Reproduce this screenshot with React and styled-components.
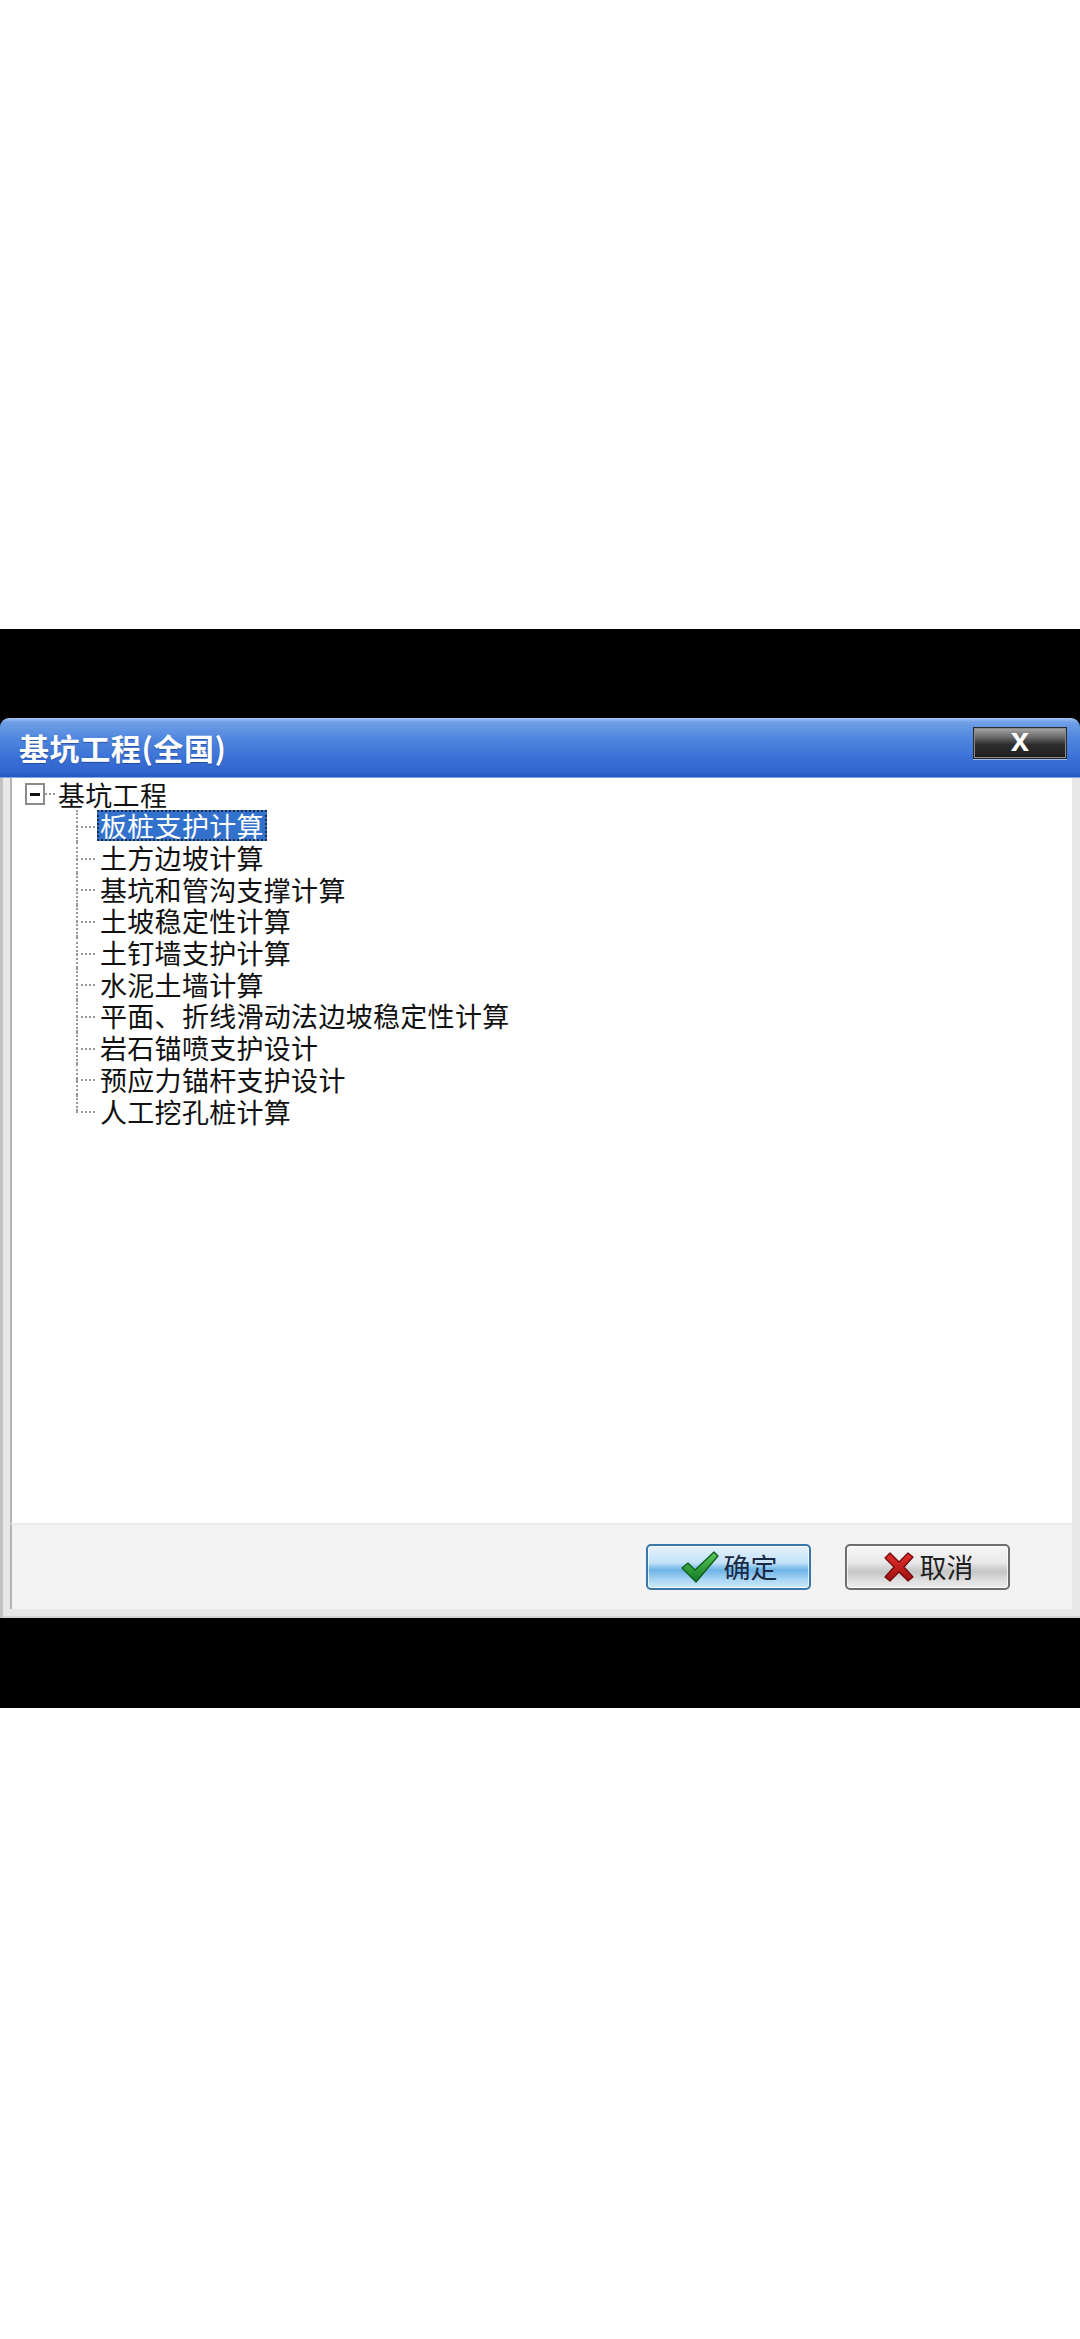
import React from 'react'
import styled, { createGlobalStyle } from 'styled-components'

const Global = createGlobalStyle`
  html, body { margin:0; padding:0; background:#fff; }
  body { font-family: "Noto Sans CJK SC", "Noto Sans", sans-serif; }
`

const items = [
  '板桩支护计算',
  '土方边坡计算',
  '基坑和管沟支撑计算',
  '土坡稳定性计算',
  '土钉墙支护计算',
  '水泥土墙计算',
  '平面、折线滑动法边坡稳定性计算',
  '岩石锚喷支护设计',
  '预应力锚杆支护设计',
  '人工挖孔桩计算',
]

const CheckIcon = () => (
  <svg width="40" height="34" viewBox="0 0 40 34">
    <defs>
      <linearGradient id="ck" x1="0" y1="0" x2="0" y2="1">
        <stop offset="0" stopColor="#5cc85a" />
        <stop offset="1" stopColor="#0d7a22" />
      </linearGradient>
    </defs>
    <path d="M2 18 L8 13 L15 20 L34 2 L38 6 L16 32 Z" fill="url(#ck)" stroke="#0b5a18" strokeWidth="1.2" strokeLinejoin="round" />
  </svg>
)

const CrossIcon = () => (
  <svg width="34" height="32" viewBox="0 0 34 32">
    <defs>
      <linearGradient id="cx" x1="0" y1="0" x2="0" y2="1">
        <stop offset="0" stopColor="#e0302c" />
        <stop offset="1" stopColor="#a00f10" />
      </linearGradient>
    </defs>
    <path d="M3 7 L8 2 L17 11 L26 2 L31 6 L22 16 L31 26 L26 30 L17 21 L8 30 L3 26 L12 16 Z" fill="url(#cx)" stroke="#6e0808" strokeWidth="1.2" strokeLinejoin="round" />
  </svg>
)

export default function App() {
  return <Page>
    <Global />
    <Spacer h={629} />
    <Band h={89} />
    <Dialog>
      <TitleBar>
        <Title>基坑工程(全国)</Title>
        <CloseButton>x</CloseButton>
      </TitleBar>
      <Frame>
        <Tree>
          <RootRow>
            <Toggle><Minus /></Toggle>
            <Stub />
            <Label>基坑工程</Label>
          </RootRow>
          <Children>
            {items.map((t, i) =>
              <Child key={t} last={i === items.length - 1}>
                <Label selected={i === 0}>{t}</Label>
              </Child>
            )}
          </Children>
        </Tree>
        <ButtonBar>
          <Button primary>
            <CheckIcon />
            <span>确定</span>
          </Button>
          <Button>
            <CrossIcon />
            <span>取消</span>
          </Button>
        </ButtonBar>
      </Frame>
    </Dialog>
    <Band h={90} />
  </Page>
}

const Page = styled.div`
  width:1080px;
  height:2339px;
  display:flex;
  flex-direction:column;
  background:#fff;
  overflow:hidden;
`
const Spacer = styled.div`
  height:${p => p.h}px;
  flex-shrink:0;
`
const Band = styled.div`
  height:${p => p.h}px;
  flex-shrink:0;
  background:#000;
`
const Dialog = styled.div`
  height:900px;
  flex-shrink:0;
  display:flex;
  flex-direction:column;
  background:#000;
`
const TitleBar = styled.div`
  height:59px;
  flex-shrink:0;
  display:flex;
  align-items:flex-start;
  justify-content:space-between;
  border-radius:9px 9px 0 0;
  background:linear-gradient(to bottom, #a6c4f2 0%, #6f9fe6 7%, #4f86de 35%, #3c73d7 65%, #2f64cd 92%, #2558c0 100%);
  border-bottom:1px solid #7ea6e6;
`
const Title = styled.div`
  margin:11px 0 0 19px;
  font-size:30px;
  line-height:36px;
  font-weight:700;
  color:#fff;
  letter-spacing:0.6px;
  text-shadow:0 1px 1px rgba(20,40,110,.5);
`
const CloseButton = styled.div`
  margin:9px 13px 0 0;
  width:94px;
  height:32px;
  box-sizing:border-box;
  display:flex;
  align-items:center;
  justify-content:center;
  border:1px solid #2a2a2a;
  box-shadow:inset 0 0 0 1px #8a8a8a, 0 1px 0 #9ab8ec;
  background:linear-gradient(to bottom, #a8a8a8 0%, #6c6c6c 30%, #2e2e2e 55%, #1c1c1c 100%);
  color:#fff;
  font-family:"Liberation Sans", Arial, sans-serif;
  font-weight:700;
  font-size:33px;
  line-height:30px;
  padding-bottom:6px;
`
const Frame = styled.div`
  flex:1;
  display:flex;
  flex-direction:column;
  background:#e8e8e8;
  border-left:3px solid #c2c2c2;
  padding:0 8px 9px 7px;
  box-shadow:inset 0 -2px 0 #d4d4d4;
`
const Tree = styled.div`
  flex:1;
  background:#fff;
  border-left:2px solid #b4b4b4;
  padding:0 0 0 13px;
`
const RootRow = styled.div`
  height:32px;
  display:flex;
  align-items:center;
`
const Toggle = styled.div`
  width:20px;
  height:22px;
  box-sizing:border-box;
  border:2px solid #8c8c8c;
  background:#fff;
  display:flex;
  align-items:center;
  justify-content:center;
`
const Minus = styled.div`
  width:10px;
  height:3px;
  background:#111;
`
const Stub = styled.div`
  width:10px;
  border-top:2px dotted #9a9a9a;
`
const Label = styled.div`
  height:31px;
  line-height:31px;
  box-sizing:border-box;
  padding:0 3px;
  font-size:27px;
  letter-spacing:0.3px;
  white-space:nowrap;
  color:${p => p.selected ? '#fff' : '#111'};
  background:${p => p.selected ? '#3372cc' : 'transparent'};
  outline:${p => p.selected ? '2px dotted #1a2a48' : 'none'};
  outline-offset:-2px;
`
const Children = styled.div`
  padding-left:51px;
`
const Child = styled.div`
  position:relative;
  height:31.7px;
  display:flex;
  align-items:center;
  padding-left:21px;
  &::before{
    content:'';
    position:absolute;
    left:0;
    top:0;
    bottom:${p => p.last ? '50%' : '0'};
    border-left:2px dotted #9a9a9a;
  }
  &::after{
    content:'';
    position:absolute;
    left:0;
    top:50%;
    width:19px;
    border-top:2px dotted #9a9a9a;
  }
`
const ButtonBar = styled.div`
  height:86px;
  flex-shrink:0;
  box-sizing:border-box;
  background:#f3f3f3;
  border-top:2px solid #ebebeb;
  border-left:2px solid #b4b4b4;
  display:flex;
  align-items:center;
  justify-content:flex-end;
  gap:34px;
  padding-right:62px;
`
const Button = styled.div`
  width:165px;
  height:46px;
  box-sizing:border-box;
  display:flex;
  align-items:center;
  justify-content:center;
  gap:4px;
  border-radius:5px;
  border:2px solid ${p => p.primary ? '#3b76a8' : '#6e6e6e'};
  background:${p => p.primary
    ? 'linear-gradient(to bottom, #e4f2fc 0%, #c4e2f8 40%, #8cc6ee 50%, #6eb3e6 58%, #a8d6f4 80%, #cfe8fa 100%)'
    : 'linear-gradient(to bottom, #f6f6f6 0%, #e8e8e8 40%, #d2d2d2 52%, #c6c6c6 62%, #dedede 82%, #eeeeee 100%)'};
  box-shadow:inset 0 0 0 1px rgba(255,255,255,.7);
  font-size:27px;
  color:${p => p.primary ? '#1a2944' : '#1e1e1e'};
  span{ line-height:30px; }
`
